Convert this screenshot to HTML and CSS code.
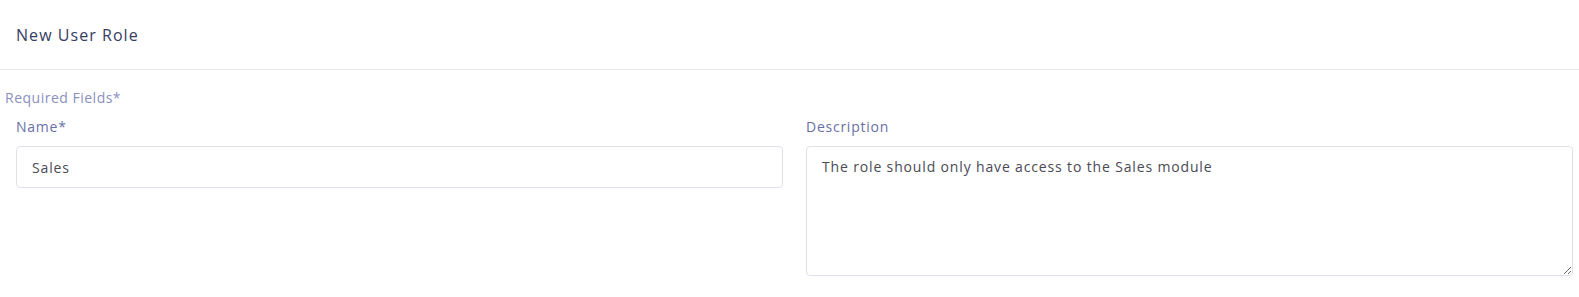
FILE: index.html
```html
<!DOCTYPE html>
<html lang="en">
<head>
<meta charset="utf-8">
<title>New User Role</title>
<link rel="stylesheet" href="styles.css">
</head>
<body>
<div class="card">
  <header class="card-header">
    <h1 class="title">New User Role</h1>
  </header>
  <div class="card-body">
    <p class="required-note">Required Fields*</p>
    <div class="form-row">
      <div class="field">
        <label class="label" for="name">Name*</label>
        <input class="input" id="name" type="text" value="Sales">
      </div>
      <div class="field">
        <label class="label" for="desc">Description</label>
        <textarea class="textarea" id="desc">The role should only have access to the Sales module</textarea>
      </div>
    </div>
  </div>
</div>
</body>
</html>
```

FILE: styles.css
```css
* { box-sizing: border-box; }
html, body { margin: 0; padding: 0; background: #ffffff; }
body {
  font-family: "Open Sans", "Liberation Sans", sans-serif;
  color: #3b4066;
}
.card-header {
  height: 70px;
  display: flex;
  align-items: center;
  padding: 0 16px;
  border-bottom: 1px solid #e7e7ee;
}
.title {
  margin: 0;
  font-size: 16px;
  font-weight: 500;
  color: #363c62;
  letter-spacing: 1.05px;
}
.card-body {
  padding: 18px 6px 0 5px;
}
.required-note {
  margin: 0;
  font-size: 14px;
  line-height: 20px;
  color: #8a8fc0;
  letter-spacing: 0.5px;
}
.form-row {
  display: flex;
  gap: 23px;
  padding-left: 11px;
  margin-top: 9px;
}
.field {
  flex: 1 1 0;
  display: flex;
  flex-direction: column;
}
.label {
  font-size: 14px;
  line-height: 20px;
  color: #6a70a6;
  margin-bottom: 9px;
  letter-spacing: 0.75px;
}
.input, .textarea {
  font-family: inherit;
  font-size: 14px;
  color: #4a4a55;
  border: 1px solid #dfe0ea;
  border-radius: 4px;
  background: #fff;
  padding: 0 15px;
  margin: 0;
  letter-spacing: 0.85px;
}
.input {
  height: 42px;
}
.textarea {
  height: 130px;
  padding-top: 10px;
  resize: vertical;
  line-height: 20px;
}
```
